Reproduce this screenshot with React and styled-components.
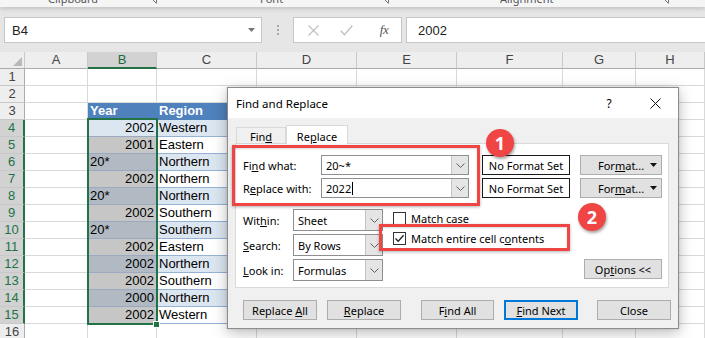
import React from 'react';
import styled, { createGlobalStyle } from 'styled-components';

const GlobalStyle = createGlobalStyle`
  html, body { margin: 0; padding: 0; background: #fff; }
  body { width: 705px; height: 338px; overflow: hidden; font-family: "Liberation Sans", Arial, sans-serif; }
`;

const Page = styled.div`
  position: relative;
  width: 705px;
  height: 338px;
  overflow: hidden;
  display: flex;
  flex-direction: column;
  background: #fff;
`;

/* ---------- ribbon remnant ---------- */
const Ribbon = styled.div`
  flex: none;
  height: 7px;
  display: flex;
  background: #f5f5f5;
  overflow: hidden;
  position: relative;
  z-index: 2;
  box-shadow: 0 2px 4px rgba(0, 0, 0, 0.16);
  font-family: "Noto Sans", sans-serif;
  font-size: 11px;
  color: #555;
`;
const RibbonGroup = styled.div`
  width: ${(p) => p.$w}px;
  padding-left: ${(p) => p.$pad}px;
  box-sizing: border-box;
  display: flex;
  align-items: flex-start;
`;
const GroupLabel = styled.span`
  line-height: 12px;
  margin-top: -7px;
  white-space: nowrap;
`;
const Launcher = styled.svg`
  margin-left: auto;
  margin-right: 3px;
  margin-top: -4px;
  flex: none;
`;

/* ---------- formula bar ---------- */
const FormulaBar = styled.div`
  flex: none;
  height: 45px;
  box-sizing: border-box;
  padding: 10px 0 0 4px;
  background: #e6e6e6;
  display: flex;
  align-items: flex-start;
  font-size: 13px;
  color: #222;
`;
const NameBox = styled.div`
  width: 258px;
  height: 26px;
  box-sizing: border-box;
  background: #fff;
  border: 1px solid #c6c6c6;
  display: flex;
  align-items: center;
  justify-content: space-between;
  padding: 0 6px 0 7px;
`;
const Grip = styled.div`
  width: 31px;
  height: 26px;
  display: flex;
  flex-direction: column;
  align-items: center;
  justify-content: center;
  gap: 2px;
`;
const GripDot = styled.span`
  width: 2px;
  height: 2px;
  background: #a6a6a6;
`;
const FxBox = styled.div`
  width: 109px;
  height: 26px;
  box-sizing: border-box;
  background: #fff;
  border: 1px solid #c6c6c6;
  display: flex;
  align-items: center;
  padding-left: 12px;
`;
const FxSlot = styled.span`
  width: 14px;
  margin-left: ${(p) => p.$ml || 0}px;
  display: flex;
  justify-content: center;
  align-items: center;
`;
const FxText = styled.span`
  font-family: "Liberation Serif", "Times New Roman", serif;
  font-style: italic;
  font-size: 13px;
  color: #555;
  letter-spacing: -0.5px;
`;
const FormulaInput = styled.div`
  flex: 1;
  margin-left: 4px;
  height: 26px;
  box-sizing: border-box;
  background: #fff;
  border: 1px solid #c6c6c6;
  border-right: none;
  display: flex;
  align-items: center;
  padding-left: 11px;
`;

/* ---------- sheet ---------- */
const Sheet = styled.div`
  position: relative;
  flex: 1;
  overflow: hidden;
  display: grid;
  grid-template-columns: 25px 63px 69px 100px 100px 100px 106px 73px 1fr;
  grid-auto-rows: 17px;
  font-size: 13px;
`;
const Corner = styled.div`
  box-sizing: border-box;
  background: #eeeeee;
  border-right: 1px solid #c8c8c8;
  border-bottom: 1px solid #ababab;
  display: flex;
  align-items: flex-end;
  justify-content: flex-end;
  padding: 0 2px 2px 0;
`;
const ColHead = styled.div`
  box-sizing: border-box;
  background: ${(p) => (p.$sel ? '#d2d2d2' : '#eeeeee')};
  border-right: 1px solid #c8c8c8;
  border-bottom: ${(p) => (p.$sel ? '2px solid #217346' : '1px solid #ababab')};
  color: ${(p) => (p.$sel ? '#1e6a40' : '#444')};
  text-align: center;
  line-height: 16px;
`;
const RowHead = styled.div`
  box-sizing: border-box;
  background: ${(p) => (p.$sel ? '#d2d2d2' : '#eeeeee')};
  border-bottom: 1px solid #c8c8c8;
  border-right: ${(p) => (p.$sel ? '2px solid #217346' : '1px solid #ababab')};
  color: ${(p) => (p.$sel ? '#217346' : '#444')};
  text-align: center;
  line-height: 16px;
`;
const Cell = styled.div`
  box-sizing: border-box;
  background: ${(p) => p.$bg || '#fff'};
  border-right: 1px solid ${(p) => p.$vline || '#d9d9d9'};
  border-bottom: 1px solid ${(p) => p.$line || '#d9d9d9'};
  color: ${(p) => p.$color || '#000'};
  font-weight: ${(p) => (p.$bold ? 700 : 400)};
  text-align: ${(p) => p.$align || 'left'};
  padding: 0 2px;
  line-height: 16px;
  white-space: nowrap;
  overflow: hidden;
`;
const SelectionBox = styled.div`
  position: absolute;
  left: 87px;
  top: 66px;
  width: 71px;
  height: 207px;
  box-sizing: border-box;
  border: 2px solid #217346;
  pointer-events: none;
`;
const FillHandle = styled.div`
  position: absolute;
  left: 153px;
  top: 269px;
  width: 5px;
  height: 5px;
  background: #217346;
  border: 1px solid #fff;
`;

/* ---------- dialog ---------- */
const Dialog = styled.div`
  position: absolute;
  left: 227px;
  top: 87px;
  width: 452px;
  box-sizing: border-box;
  border: 1px solid #8c8c8c;
  background: #f0f0f0;
  box-shadow: 0 4px 14px rgba(0, 0, 0, 0.26), 0 0 3px rgba(0, 0, 0, 0.12);
  display: flex;
  flex-direction: column;
  padding-bottom: 8px;
  font-family: "Noto Sans", sans-serif;
  font-size: 11px;
  color: #000;
  z-index: 5;
`;
const TitleBar = styled.div`
  height: 30px;
  background: #fff;
  display: flex;
  align-items: center;
  padding-left: 8px;
  font-size: 11.5px;
`;
const TitleText = styled.span`
  flex: 1;
`;
const TitleBtn = styled.span`
  width: 46px;
  height: 30px;
  display: flex;
  align-items: center;
  justify-content: center;
  font-size: 12px;
`;
const Body = styled.div`
  padding: 7px 0 0 7px;
  display: flex;
  flex-direction: column;
`;
const TabRow = styled.div`
  height: 18px;
  padding-left: 1px;
  display: flex;
  align-items: flex-end;
`;
const Tab = styled.div`
  position: relative;
  z-index: 1;
  box-sizing: border-box;
  width: ${(p) => p.$w}px;
  height: ${(p) => (p.$active ? 19 : 16)}px;
  margin-bottom: ${(p) => (p.$active ? -1 : 0)}px;
  background: ${(p) => (p.$active ? '#fff' : '#f0f0f0')};
  border: 1px solid #d9d9d9;
  border-bottom: none;
  display: flex;
  align-items: center;
  justify-content: center;
  padding-top: ${(p) => (p.$active ? 2 : 1)}px;
`;
const Panel = styled.div`
  width: 434px;
  box-sizing: border-box;
  background: #fff;
  border: 1px solid #d9d9d9;
  padding: 11px 0 6px 7px;
  display: flex;
  flex-direction: column;
`;
const FieldRows = styled.div`
  display: flex;
  flex-direction: column;
  gap: 3px;
`;
const FieldRow = styled.div`
  display: flex;
  align-items: center;
  height: 20px;
`;
const Label = styled.span`
  width: ${(p) => p.$w}px;
  flex: none;
  white-space: nowrap;
`;
const Combo = styled.div`
  width: ${(p) => p.$w}px;
  height: ${(p) => p.$h}px;
  box-sizing: border-box;
  border: 1px solid #8f8f8f;
  background: #fff;
  display: flex;
  flex: none;
`;
const ComboText = styled.span`
  flex: 1;
  display: flex;
  align-items: center;
  padding-left: 4px;
`;
const Caret = styled.span`
  width: 1px;
  height: 13px;
  background: #000;
  margin-left: 1px;
`;
const ComboBtn = styled.span`
  width: 16px;
  background: #e5e5e5;
  border-left: 1px solid #c4c4c4;
  display: flex;
  align-items: center;
  justify-content: center;
`;
const NoFormat = styled.div`
  margin-left: 13px;
  width: 88px;
  height: 20px;
  box-sizing: border-box;
  border: 1px solid #1a1a1a;
  display: flex;
  align-items: center;
  justify-content: center;
  flex: none;
`;
const Button = styled.div`
  width: ${(p) => p.$w}px;
  height: 20px;
  box-sizing: border-box;
  background: #e1e1e1;
  border: ${(p) => (p.$primary ? '2px solid #0078d7' : '1px solid #adadad')};
  display: flex;
  align-items: center;
  justify-content: center;
  flex: none;
  margin-left: ${(p) => p.$ml || 0}px;
  white-space: nowrap;
`;
const FormatButton = styled(Button)`
  justify-content: flex-start;
  padding-left: 17px;
  padding-right: 4px;
`;
const Arrow = styled.svg`
  margin-left: auto;
`;
const OptionsArea = styled.div`
  margin-top: 11px;
  display: flex;
`;
const SelectCol = styled.div`
  display: flex;
  flex-direction: column;
  gap: 3px;
`;
const SelectRow = styled.div`
  display: flex;
  align-items: center;
  height: 22px;
`;
const CheckCol = styled.div`
  flex: 1;
  margin-left: 10px;
  padding-top: 2px;
  display: flex;
  flex-direction: column;
  gap: 6px;
`;
const CheckRow = styled.label`
  display: flex;
  align-items: center;
  height: 14px;
  gap: 5px;
`;
const Box = styled.span`
  width: 13px;
  height: 13px;
  box-sizing: border-box;
  border: 1px solid #333;
  background: #fff;
  display: flex;
  align-items: center;
  justify-content: center;
`;
const OptionsBtn = styled(Button)`
  margin-top: auto;
  margin-bottom: 2px;
  margin-right: 6px;
  align-self: flex-end;
`;
const ButtonRow = styled.div`
  margin-top: 12px;
  padding-left: 8px;
  display: flex;
`;

/* ---------- annotations ---------- */
const Highlight = styled.div`
  position: absolute;
  left: ${(p) => p.$x}px;
  top: ${(p) => p.$y}px;
  width: ${(p) => p.$w}px;
  height: ${(p) => p.$h}px;
  box-sizing: border-box;
  border: 3px solid #ef4545;
  box-shadow: 0 1px 3px rgba(0, 0, 0, 0.3), inset 0 1px 2px rgba(0, 0, 0, 0.15);
  z-index: 6;
`;
const Badge = styled.div`
  position: absolute;
  left: ${(p) => p.$x - 14}px;
  top: ${(p) => p.$y - 14}px;
  width: 28px;
  height: 28px;
  border-radius: 50%;
  background: #ef4545;
  color: #fff;
  font-family: "Noto Sans", sans-serif;
  font-weight: 700;
  font-size: 18px;
  display: flex;
  align-items: center;
  justify-content: center;
  box-shadow: 1px 2px 3px rgba(0, 0, 0, 0.35);
  z-index: 7;
`;

const Chevron = () => (
  <svg width="9" height="5" viewBox="0 0 9 5">
    <path d="M0.5 0.5 L4.5 4.5 L8.5 0.5" stroke="#606060" strokeWidth="1" fill="none" />
  </svg>
);

const data = [
  ['2002', 'Western'],
  ['2001', 'Eastern'],
  ['20*', 'Northern'],
  ['2002', 'Northern'],
  ['20*', 'Northern'],
  ['2002', 'Southern'],
  ['20*', 'Southern'],
  ['2002', 'Eastern'],
  ['2002', 'Northern'],
  ['2002', 'Southern'],
  ['2000', 'Northern'],
  ['2002', 'Western'],
];

const cols = ['A', 'B', 'C', 'D', 'E', 'F', 'G', 'H'];

function SheetRows() {
  const out = [];
  for (let r = 1; r <= 16; r++) {
    const sel = r >= 4 && r <= 15;
    out.push(
      <RowHead key={`h${r}`} $sel={sel}>
        {r}
      </RowHead>
    );
    out.push(<Cell key={`a${r}`} />);
    if (r === 3) {
      out.push(
        <Cell key={`b${r}`} $bg="#4f81bd" $vline="#4f81bd" $line="#4f81bd" $color="#fff" $bold>
          Year
        </Cell>
      );
      out.push(
        <Cell key={`c${r}`} $bg="#4f81bd" $vline="#4f81bd" $line="#4f81bd" $color="#fff" $bold>
          Region
        </Cell>
      );
    } else if (sel) {
      const i = r - 4;
      const [year, region] = data[i];
      const banded = i % 2 === 0;
      const bBg = i === 0 ? '#dce6f1' : banded ? '#b1b9c3' : '#c6c6c6';
      out.push(
        <Cell
          key={`b${r}`}
          $bg={bBg}
          $vline={bBg}
          $line="#9aabbf"
          $align={year.includes('*') ? 'left' : 'right'}
        >
          {year}
        </Cell>
      );
      const cBg = banded ? '#dce6f1' : '#fff';
      out.push(
        <Cell key={`c${r}`} $bg={cBg} $vline={cBg} $line="#95b3d7">
          {region}
        </Cell>
      );
    } else {
      out.push(<Cell key={`b${r}`} />);
      out.push(<Cell key={`c${r}`} />);
    }
    for (let c = 3; c < 8; c++) out.push(<Cell key={`x${r}-${c}`} />);
  }
  return out;
}

export default function App() {
  return (
    <Page>
      <GlobalStyle />
      <Ribbon>
        <RibbonGroup $w={160} $pad={48}>
          <GroupLabel>Clipboard</GroupLabel>
          <Launcher width="8" height="8" viewBox="0 0 8 8">
            <path d="M0.5 0.5 H7.5 V7.5 M3 3 L7 7" stroke="#777" fill="none" />
          </Launcher>
        </RibbonGroup>
        <RibbonGroup $w={232} $pad={100}>
          <GroupLabel>Font</GroupLabel>
          <Launcher width="8" height="8" viewBox="0 0 8 8">
            <path d="M0.5 0.5 H7.5 V7.5 M3 3 L7 7" stroke="#777" fill="none" />
          </Launcher>
        </RibbonGroup>
        <RibbonGroup $w={280} $pad={108}>
          <GroupLabel>Alignment</GroupLabel>
          <Launcher width="8" height="8" viewBox="0 0 8 8">
            <path d="M0.5 0.5 H7.5 V7.5 M3 3 L7 7" stroke="#777" fill="none" />
          </Launcher>
        </RibbonGroup>
      </Ribbon>

      <FormulaBar>
        <NameBox>
          <span>B4</span>
          <svg width="7" height="4" viewBox="0 0 7 4">
            <path d="M0 0 H7 L3.5 4 Z" fill="#777" />
          </svg>
        </NameBox>
        <Grip>
          <GripDot />
          <GripDot />
          <GripDot />
        </Grip>
        <FxBox>
          <FxSlot>
            <svg width="11" height="11" viewBox="0 0 11 11">
              <path d="M0.5 0.5 L10.5 10.5 M10.5 0.5 L0.5 10.5" stroke="#c2c2c2" strokeWidth="1.3" />
            </svg>
          </FxSlot>
          <FxSlot $ml={19}>
            <svg width="13" height="11" viewBox="0 0 13 11">
              <path d="M0.8 5.8 L4.5 9.8 L12.3 0.8" stroke="#c2c2c2" strokeWidth="1.4" fill="none" />
            </svg>
          </FxSlot>
          <FxSlot $ml={24}>
            <FxText>fx</FxText>
          </FxSlot>
        </FxBox>
        <FormulaInput>2002</FormulaInput>
      </FormulaBar>

      <Sheet>
        <Corner>
          <svg width="9" height="9" viewBox="0 0 9 9">
            <path d="M9 0 V9 H0 Z" fill="#b9b9b9" />
          </svg>
        </Corner>
        {cols.map((c) => (
          <ColHead key={c} $sel={c === 'B'}>
            {c}
          </ColHead>
        ))}
        <SheetRows />
        <SelectionBox />
        <FillHandle />
      </Sheet>

      <Dialog>
        <TitleBar>
          <TitleText>Find and Replace</TitleText>
          <TitleBtn>?</TitleBtn>
          <TitleBtn>
            <svg width="11" height="11" viewBox="0 0 11 11">
              <path d="M0.5 0.5 L10.5 10.5 M10.5 0.5 L0.5 10.5" stroke="#111" strokeWidth="1" />
            </svg>
          </TitleBtn>
        </TitleBar>
        <Body>
          <TabRow>
            <Tab $w={50}>
              <span>
                Fin<u>d</u>
              </span>
            </Tab>
            <Tab $w={62} $active>
              <span>
                Re<u>p</u>lace
              </span>
            </Tab>
          </TabRow>
          <Panel>
            <FieldRows>
              <FieldRow>
                <Label $w={78}>
                  Fi<u>n</u>d what:
                </Label>
                <Combo $w={148} $h={20}>
                  <ComboText>20~*</ComboText>
                  <ComboBtn>
                    <Chevron />
                  </ComboBtn>
                </Combo>
                <NoFormat>No Format Set</NoFormat>
                <FormatButton $w={82} $ml={10}>
                  <span>
                    For<u>m</u>at...
                  </span>
                  <Arrow width="7" height="4" viewBox="0 0 7 4">
                    <path d="M0 0 H7 L3.5 4 Z" fill="#111" />
                  </Arrow>
                </FormatButton>
              </FieldRow>
              <FieldRow>
                <Label $w={78}>
                  R<u>e</u>place with:
                </Label>
                <Combo $w={148} $h={20}>
                  <ComboText>
                    2022
                    <Caret />
                  </ComboText>
                  <ComboBtn>
                    <Chevron />
                  </ComboBtn>
                </Combo>
                <NoFormat>No Format Set</NoFormat>
                <FormatButton $w={82} $ml={10}>
                  <span>
                    For<u>m</u>at...
                  </span>
                  <Arrow width="7" height="4" viewBox="0 0 7 4">
                    <path d="M0 0 H7 L3.5 4 Z" fill="#111" />
                  </Arrow>
                </FormatButton>
              </FieldRow>
            </FieldRows>
            <OptionsArea>
              <SelectCol>
                <SelectRow>
                  <Label $w={50}>
                    Wit<u>h</u>in:
                  </Label>
                  <Combo $w={90} $h={22}>
                    <ComboText>Sheet</ComboText>
                    <ComboBtn>
                      <Chevron />
                    </ComboBtn>
                  </Combo>
                </SelectRow>
                <SelectRow>
                  <Label $w={50}>
                    <u>S</u>earch:
                  </Label>
                  <Combo $w={90} $h={22}>
                    <ComboText>By Rows</ComboText>
                    <ComboBtn>
                      <Chevron />
                    </ComboBtn>
                  </Combo>
                </SelectRow>
                <SelectRow>
                  <Label $w={50}>
                    <u>L</u>ook in:
                  </Label>
                  <Combo $w={90} $h={22}>
                    <ComboText>Formulas</ComboText>
                    <ComboBtn>
                      <Chevron />
                    </ComboBtn>
                  </Combo>
                </SelectRow>
              </SelectCol>
              <CheckCol>
                <CheckRow>
                  <Box />
                  <span>
                    Match <u>c</u>ase
                  </span>
                </CheckRow>
                <CheckRow>
                  <Box>
                    <svg width="11" height="11" viewBox="0 0 11 11">
                      <path d="M1.5 5.5 L4.2 8.3 L9.6 2.2" stroke="#222" strokeWidth="1.3" fill="none" />
                    </svg>
                  </Box>
                  <span>
                    Match entire cell c<u>o</u>ntents
                  </span>
                </CheckRow>
                <OptionsBtn $w={78}>
                  <span>
                    Op<u>t</u>ions &lt;&lt;
                  </span>
                </OptionsBtn>
              </CheckCol>
            </OptionsArea>
          </Panel>
          <ButtonRow>
            <Button $w={74}>
              <span>
                Replace <u>A</u>ll
              </span>
            </Button>
            <Button $w={74} $ml={10}>
              <span>
                <u>R</u>eplace
              </span>
            </Button>
            <Button $w={73} $ml={20}>
              <span>
                F<u>i</u>nd All
              </span>
            </Button>
            <Button $w={74} $ml={10} $primary>
              <span>
                <u>F</u>ind Next
              </span>
            </Button>
            <Button $w={74} $ml={19}>
              <span>Close</span>
            </Button>
          </ButtonRow>
        </Body>
      </Dialog>

      <Highlight $x={232} $y={145} $w={248} $h={61} />
      <Highlight $x={379} $y={224} $w={191} $h={27} />
      <Badge $x={500} $y={143}>1</Badge>
      <Badge $x={592} $y={217}>2</Badge>
    </Page>
  );
}
